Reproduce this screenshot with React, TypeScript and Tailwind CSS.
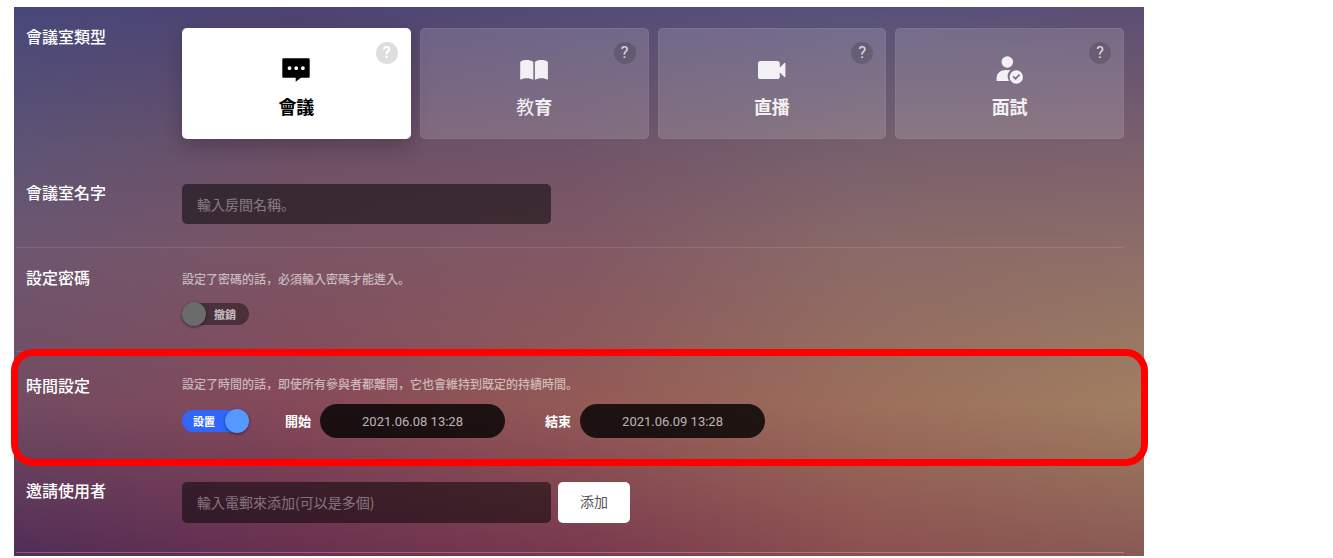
import React, { useState } from "react";

interface RoomType {
  id: string;
  title: React.ReactNode;
  icon: React.ReactNode;
}

const ChatIcon = () => (
  <svg className="w-7 h-7" viewBox="0 0 28 28" fill="currentColor" aria-hidden="true">
    <path
      fillRule="evenodd"
      d="M1.4 2.300h25.200a1.100 1.100 0 0 1 1.100 1.100v17.300a1.100 1.100 0 0 1-1.100 1.100H18.800L13.700 25.700v-3.900H1.400a1.100 1.100 0 0 1-1.100-1.100V3.400a1.100 1.100 0 0 1 1.100-1.100zM7.500 10.300a1.900 1.900 0 1 0 0 3.800 1.900 1.900 0 0 0 0-3.800zm6.700 0a1.900 1.900 0 1 0 0 3.800 1.900 1.900 0 0 0 0-3.800zm6.700 0a1.900 1.900 0 1 0 0 3.800 1.900 1.900 0 0 0 0-3.800z"
    />
  </svg>
);

const BookIcon = () => (
  <svg className="w-7 h-7" viewBox="0 0 28 28" fill="currentColor" aria-hidden="true">
    <path d="M.2 6C1.600 4.700 4 4.100 6.600 4.100c2.700 0 5.200.6 6.700 1.900v17.800c-1.700-1-4-1.600-6.700-1.600-2.500 0-4.800.5-6.400 1.600z" />
    <path d="M14.900 6c1.500-1.300 3.800-1.900 6.500-1.900 2.600 0 5 .6 6.500 1.900v17.800c-1.700-1.100-4-1.600-6.500-1.600-2.600 0-4.800.6-6.500 1.600z" />
  </svg>
);

const CameraIcon = () => (
  <svg className="w-7 h-7" viewBox="0 0 28 28" fill="currentColor" aria-hidden="true">
    <path d="M2.600 5h16.600a2.600 2.600 0 0 1 2.600 2.600v3.900l4.800-4.700c.3-.3.800-.1.800.4v13.600c0 .5-.5.7-.8.4l-4.800-4.700v3.900a2.600 2.600 0 0 1-2.600 2.600H2.600A2.600 2.600 0 0 1 0 20.400V7.600A2.600 2.600 0 0 1 2.600 5z" />
  </svg>
);

const InterviewIcon = () => (
  <svg className="w-7 h-7" viewBox="0 0 28 28" fill="currentColor" aria-hidden="true">
    <circle cx="11.300" cy="6" r="5.800" />
    <path d="M14.300 14.100a8.300 8.300 0 0 0-1.300 10.800H.6v-2.500c0-4.900 3.900-8.400 9.200-8.400h3.400z" />
    <path
      fillRule="evenodd"
      d="M20.300 14.300a6.700 6.700 0 1 0 0 13.400 6.700 6.700 0 0 0 0-13.400zm3.900 4.900-4.600 4.800-3.100-3 1.300-1.300 1.800 1.700 3.300-3.500z"
    />
  </svg>
);

const roomTypes: RoomType[] = [
  { id: "meeting", title: "會議", icon: <ChatIcon /> },
  {
    id: "education",
    title: (
      <>
        <span className="font-normal">教</span>育
      </>
    ),
    icon: <BookIcon />,
  },
  { id: "live", title: "直播", icon: <CameraIcon /> },
  { id: "interview", title: "面試", icon: <InterviewIcon /> },
];

const Toggle = ({
  label,
  checked,
  onChange,
}: {
  label: string;
  checked: boolean;
  onChange: (value: boolean) => void;
}) => (
  <label
    className={`relative flex items-center w-[67px] h-[22px] rounded-full text-[11px] font-bold cursor-pointer ${
      checked ? "bg-[#3165fb] text-white pl-[11px]" : "bg-black/40 text-white/70 pl-8"
    }`}
  >
    <input
      type="checkbox"
      className="sr-only"
      checked={checked}
      onChange={(e) => onChange(e.target.checked)}
    />
    {label}
    <span
      className={`absolute -top-px w-6 h-6 rounded-full shadow-[0_1px_3px_rgba(0,0,0,0.5)] ${
        checked ? "right-0 bg-[#5598ff]" : "left-0 bg-[#6b6b6b]"
      }`}
    />
  </label>
);

const labelClass = "text-base leading-[22px] font-medium text-white";
const descClass = "text-xs leading-5 font-medium text-white/60";
const inputClass =
  "w-[369px] rounded-[5px] bg-black/50 px-[15px] text-sm text-white placeholder:text-white/40 outline-none";
const dateClass =
  "w-[185px] h-[34px] rounded-full bg-black/80 text-center font-['Roboto',sans-serif] text-[13px] font-normal text-white/70 outline-none";

export default function App() {
  const [roomType, setRoomType] = useState("meeting");
  const [usePassword, setUsePassword] = useState(false);
  const [useTime, setUseTime] = useState(true);
  const [roomName, setRoomName] = useState("");
  const [email, setEmail] = useState("");
  const [start, setStart] = useState("2021.06.08 13:28");
  const [end, setEnd] = useState("2021.06.09 13:28");

  return (
    <div className="min-h-screen bg-white pt-[7px] pl-[14px] pr-[189px] font-['Noto_Sans_CJK_KR',sans-serif]">
      <main className="relative isolate pl-0.5 pr-5 pb-[3px]">
        {/* Backdrop: horizontal colour bands, each fading into the one below */}
        <div className="absolute inset-0 -z-10 bg-[linear-gradient(90deg,#522d57,#69304f_25%,#78394f_50%,#8b5050_75%,#8a5a55)]" />
        <div className="absolute inset-0 -z-10 bg-[linear-gradient(90deg,#734c62,#864a59_25%,#945a56_50%,#9c6f5b_75%,#a17f62)] [mask-image:linear-gradient(#000_72%,transparent)]" />
        <div className="absolute inset-0 -z-10 bg-[linear-gradient(90deg,#6d5770,#7b5564_25%,#815864_50%,#8a6a68_75%,#8d6e68)] [mask-image:linear-gradient(#000_44%,transparent_72%)]" />
        <div className="absolute inset-0 -z-10 bg-[linear-gradient(90deg,#5c5375,#6b4f66_25%,#6e5469_50%,#755f6d_75%,#7a5f6e)] [mask-image:linear-gradient(#000_24%,transparent_44%)]" />
        <div className="absolute inset-0 -z-10 bg-[linear-gradient(90deg,#47487a,#4d4272_25%,#534c77_50%,#57527b_75%,#5c4e74)] [mask-image:linear-gradient(#000,transparent_24%)]" />

        {/* Room type */}
        <section className="grid grid-cols-[156px_1fr] pl-[10px] pt-[18px]">
          <h2 className={labelClass}>會議室類型</h2>
          <div className="mt-[3px] grid grid-cols-4 gap-[9px]">
            {roomTypes.map((type) => {
              const active = roomType === type.id;
              return (
                <div
                  key={type.id}
                  className={`relative h-[111px] rounded-[5px] ${
                    active
                      ? "bg-white text-black shadow-[0_8px_20px_rgba(0,0,0,0.2)]"
                      : "bg-white/15 text-white/90 ring-1 ring-inset ring-white/5"
                  }`}
                >
                  <label className="flex h-full flex-col items-center pt-7 cursor-pointer">
                    <input
                      type="radio"
                      name="roomType"
                      className="sr-only"
                      checked={active}
                      onChange={() => setRoomType(type.id)}
                    />
                    {type.icon}
                    <span className="mt-2 text-lg leading-7 font-bold">{type.title}</span>
                  </label>
                  <button
                    type="button"
                    className={`absolute right-[13px] top-[14px] flex h-[22px] w-[22px] items-center justify-center rounded-full font-['Roboto',sans-serif] text-base ${
                      active
                        ? "bg-[#dedede] font-bold text-white"
                        : "bg-black/15 font-normal text-white/80"
                    }`}
                  >
                    ?
                  </button>
                </div>
              );
            })}
          </div>
        </section>

        {/* Room name */}
        <section className="grid grid-cols-[156px_1fr] border-b border-white/10 pl-[10px] pt-[42px] pb-[23px]">
          <label htmlFor="roomName" className={labelClass}>
            會議室名字
          </label>
          <div className="mt-[3px] flex">
            <input
              id="roomName"
              type="text"
              placeholder="輸入房間名稱。"
              value={roomName}
              onChange={(e) => setRoomName(e.target.value)}
              className={`${inputClass} h-10`}
            />
          </div>
        </section>

        {/* Password */}
        <section className="grid grid-cols-[156px_1fr] border-b border-white/10 pl-[10px] pt-[18px] pb-[26px]">
          <h2 className={labelClass}>設定密碼</h2>
          <div className="mt-[3px]">
            <p className={descClass}>設定了密碼的話，必須輸入密碼才能進入。</p>
            <div className="mt-[14px]">
              <Toggle
                label={usePassword ? "設置" : "撤銷"}
                checked={usePassword}
                onChange={setUsePassword}
              />
            </div>
          </div>
        </section>

        {/* Time */}
        <section className="relative grid grid-cols-[156px_1fr] border-b border-white/10 pl-[10px] pt-[22px] pb-[21px]">
          <h2 className={labelClass}>時間設定</h2>
          <div>
            <p className={descClass}>
              設定了時間的話，即使所有參與者都離開，它也會維持到既定的持續時間。
            </p>
            <div className="mt-[10px] flex items-center text-[13px] font-bold text-white">
              <Toggle
                label={useTime ? "設置" : "撤銷"}
                checked={useTime}
                onChange={setUseTime}
              />
              <label htmlFor="start" className="ml-9 mr-[9px]">
                開始
              </label>
              <input
                id="start"
                type="text"
                value={start}
                onChange={(e) => setStart(e.target.value)}
                className={dateClass}
              />
              <label htmlFor="end" className="ml-10 mr-[9px]">
                結束
              </label>
              <input
                id="end"
                type="text"
                value={end}
                onChange={(e) => setEnd(e.target.value)}
                className={dateClass}
              />
            </div>
          </div>
          <div className="pointer-events-none absolute -left-[5px] -right-6 -top-[3px] -bottom-[7px] rounded-[22px] border-[7px] border-[#ff0000]" />
        </section>

        {/* Invite */}
        <section className="grid grid-cols-[156px_1fr] border-b border-white/25 pl-[10px] pt-[19px] pb-[29px]">
          <label htmlFor="email" className={labelClass}>
            邀請使用者
          </label>
          <div className="mt-[3px] flex gap-[7px]">
            <input
              id="email"
              type="text"
              placeholder="輸入電郵來添加(可以是多個)"
              value={email}
              onChange={(e) => setEmail(e.target.value)}
              className={`${inputClass} h-[41px] pb-0.5`}
            />
            <button
              type="button"
              className="h-[41px] w-[72px] rounded-[5px] bg-white pb-1 text-sm text-[#555555]"
            >
              添加
            </button>
          </div>
        </section>
      </main>
    </div>
  );
}
